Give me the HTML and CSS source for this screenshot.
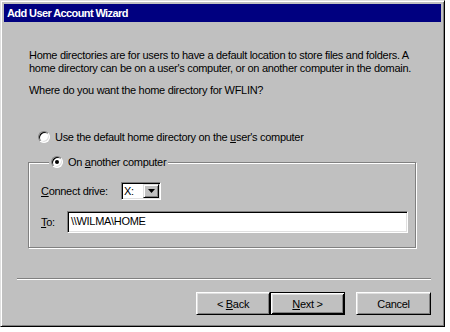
FILE: index.html
```html
<!DOCTYPE html>
<html lang="en">
<head>
    <meta charset="UTF-8">
    <title>Add User Account Wizard</title>
    <link rel="stylesheet" href="styles.css">
</head>
<body>
    <div class="window">
        <div class="titlebar">Add User Account Wizard</div>
        <div class="content">
            <p class="intro">Home directories are for users to have a default location to store files and folders. A<br>home directory can be on a user's computer, or on another computer in the domain.</p>
            <p class="question">Where do you want the home directory for WFLIN?</p>

            <label class="option first-option">
                <span class="radio"></span>
                <span>Use the default home directory on the <u>u</u>ser's computer</span>
            </label>

            <fieldset class="group">
                <legend>
                    <label class="option">
                        <span class="radio checked"></span>
                        <span>On <u>a</u>nother computer</span>
                    </label>
                </legend>

                <div class="field-row drive-row">
                    <span class="field-label"><u>C</u>onnect drive:</span>
                    <div class="combo">
                        <span class="combo-value">X:</span>
                        <span class="combo-btn">
                            <svg width="7" height="4" viewBox="0 0 7 4"><path d="M0 0h7L3.5 4z" fill="#000"/></svg>
                        </span>
                    </div>
                </div>

                <div class="field-row path-row">
                    <span class="field-label to-label"><u>T</u>o:</span>
                    <div class="textbox">\\WILMA\HOME</div>
                </div>
            </fieldset>

            <div class="separator"></div>

            <div class="buttons">
                <button class="btn back">&lt; <u>B</u>ack</button>
                <button class="btn next default"><u>N</u>ext &gt;</button>
                <button class="btn cancel">Cancel</button>
            </div>
        </div>
    </div>
</body>
</html>
```

FILE: styles.css
```css
body {
    margin: 0;
    background: #fff;
    font-family: "Liberation Sans", Arial, sans-serif;
    font-size: 11px;
    letter-spacing: -0.3px;
    color: #000;
}

.window {
    box-sizing: border-box;
    width: 445px;
    height: 327px;
    padding: 3px;
    background: #c0c0c0;
    border: 1px solid;
    border-color: #dfdfdf #000 #000 #dfdfdf;
    box-shadow: inset 1px 1px #fff, inset -1px -1px #808080;
}

.titlebar {
    height: 18px;
    line-height: 18px;
    padding-left: 3px;
    background: #000080;
    color: #fff;
    font-weight: bold;
    font-size: 11px;
    letter-spacing: -0.6px;
}

.content {
    padding: 0 10px 0 13px;
}

p {
    margin: 0;
    line-height: 13px;
}

.intro {
    margin-top: 27px;
    padding-left: 12px;
    white-space: nowrap;
}

.question {
    margin-top: 9px;
    padding-left: 12px;
}

.option {
    display: flex;
    align-items: center;
    height: 14px;
}

.first-option {
    margin-top: 33px;
    margin-left: 21px;
}

.radio {
    box-sizing: border-box;
    width: 12px;
    height: 12px;
    margin-right: 5px;
    border-radius: 50%;
    border: 1px solid;
    border-color: #808080 #fff #fff #808080;
    background: #fff;
    box-shadow: inset 1px 1px #000, inset -1px -1px #dfdfdf;
    display: flex;
    align-items: center;
    justify-content: center;
}

.radio.checked::after {
    content: "";
    width: 4px;
    height: 4px;
    border-radius: 50%;
    background: #000;
}

.group {
    margin: 11px 0 0 11px;
    width: 388px;
    box-sizing: border-box;
    padding: 0 0 14px 12px;
    border: 1px solid #808080;
    box-shadow: inset 1px 1px #fff, 1px 1px #fff;
}

.group legend {
    margin-left: 8px;
    padding: 0 2px;
    background: #c0c0c0;
}

.field-row {
    display: flex;
    align-items: center;
}

.drive-row {
    margin-top: 13px;
}

.path-row {
    margin-top: 11px;
}

.field-label {
    width: 80px;
}

.field-label.to-label {
    width: 26px;
}

.combo {
    box-sizing: border-box;
    display: flex;
    width: 40px;
    height: 18px;
    border: 1px solid;
    border-color: #808080 #fff #fff #808080;
    box-shadow: inset 1px 1px #000, inset -1px -1px #dfdfdf;
    background: #fff;
    padding: 1px 1px 1px 2px;
}

.combo-value {
    flex: 1;
    line-height: 14px;
}

.combo-btn {
    box-sizing: border-box;
    width: 16px;
    height: 14px;
    background: #c0c0c0;
    border: 1px solid;
    border-color: #dfdfdf #000 #000 #dfdfdf;
    box-shadow: inset 1px 1px #fff, inset -1px -1px #808080;
    display: flex;
    align-items: center;
    justify-content: center;
}

.textbox {
    box-sizing: border-box;
    width: 341px;
    height: 22px;
    line-height: 18px;
    padding-left: 3px;
    background: #fff;
    border: 1px solid;
    border-color: #808080 #fff #fff #808080;
    box-shadow: inset 1px 1px #000, inset -1px -1px #dfdfdf;
}

.separator {
    margin-top: 30px;
    width: 414px;
    height: 1px;
    background: #808080;
    border-bottom: 1px solid #fff;
}

.buttons {
    display: flex;
    justify-content: flex-end;
    width: 414px;
    margin-top: 12px;
}

.btn {
    box-sizing: border-box;
    width: 75px;
    height: 23px;
    padding: 0;
    font-family: inherit;
    font-size: 11px;
    letter-spacing: inherit;
    color: #000;
    background: #c0c0c0;
    border: 1px solid;
    border-color: #fff #000 #000 #fff;
    box-shadow: inset 1px 1px #dfdfdf, inset -1px -1px #808080;
}

.btn.back {
    width: 74px;
}

.btn.default {
    border: 1px solid #000;
    box-shadow: inset 1px 1px #fff, inset -1px -1px #000, inset 2px 2px #dfdfdf, inset -2px -2px #808080;
}

.btn.cancel {
    margin-left: 11px;
}
```
